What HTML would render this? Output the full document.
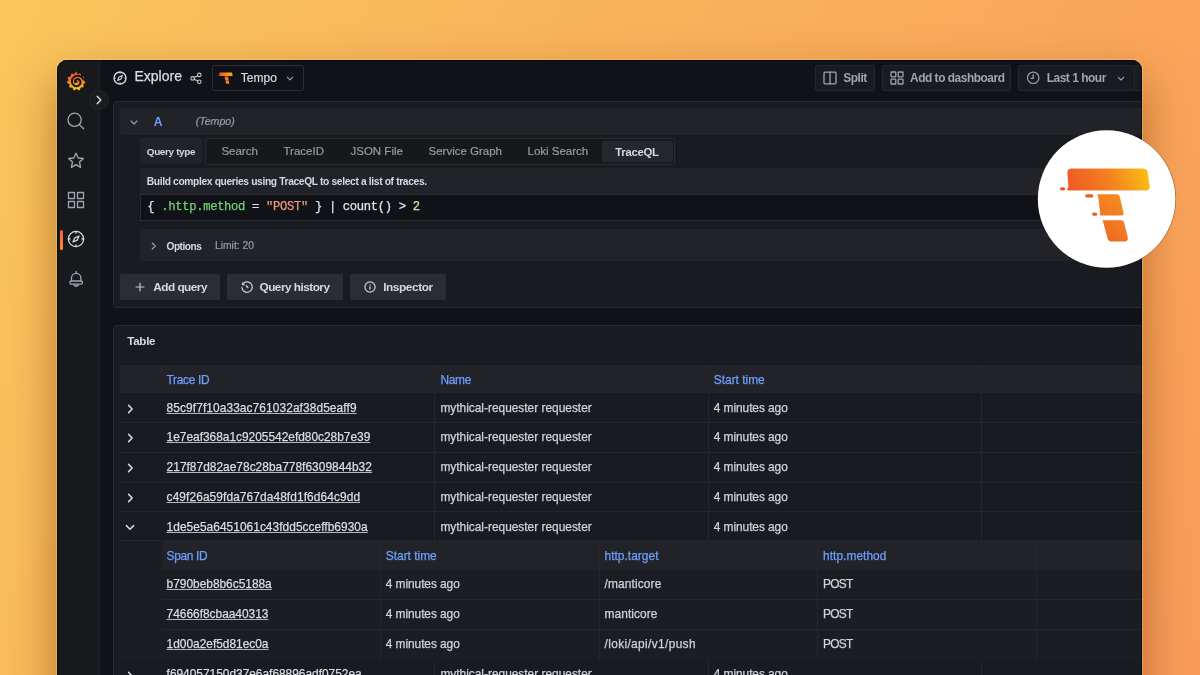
<!DOCTYPE html>
<html><head><meta charset="utf-8">
<style>
*{box-sizing:border-box;margin:0;padding:0}
html,body{width:1200px;height:675px;overflow:hidden}
body{position:relative;font-family:"Liberation Sans",sans-serif;color:#ccccdc;
 background:linear-gradient(115deg,#fac65c 0%,#f9bb5b 21%,#f9b25a 42%,#f9a55a 79%,#f99c5a 100%);}
#shadow{position:absolute;left:57px;top:60px;width:1085px;height:680px;border-radius:10px;background:#111217;
 box-shadow:0 0 0 1px rgba(255,228,110,0.35),0 20px 45px 0 rgba(120,50,0,0.5)}
#win{will-change:transform;position:absolute;left:0;top:0;width:1200px;height:675px;background:#111217;
 clip-path:inset(60px 58px -20px 57px round 10px)}
.t{position:absolute;white-space:nowrap;line-height:1}
.b{position:absolute}
svg{position:absolute;overflow:visible}
.ic{fill:none;stroke:#a4a5b0;stroke-width:1.3;stroke-linecap:round;stroke-linejoin:round}
.tbtn{position:absolute;top:65px;height:26px;background:#181b1f;border:1px solid #25272c;border-radius:2px}
.tbt{font-size:11.9px;font-weight:bold;letter-spacing:-0.45px;color:#a3a4ac}
</style></head>
<body>
<div id="shadow"></div>
<div id="win">
  <!-- sidebar -->
  <div class="b" style="left:57px;top:60px;width:43px;height:620px;background:#17191d"></div>
  <div class="b" style="left:99px;top:60px;width:1px;height:620px;background:#202227"></div>

  <!-- grafana logo -->
  <svg width="20" height="20" style="left:66px;top:71px" viewBox="0 0 20 20">
    <defs><linearGradient id="gl" x1="0" y1="0" x2="0" y2="1"><stop offset="0" stop-color="#ee4b2b"/><stop offset="0.4" stop-color="#f4712a"/><stop offset="1" stop-color="#fbd00e"/></linearGradient></defs>
    <path fill="url(#gl)" d="M10 0.3 L11.6 3 L14.5 2.6 L15.3 5.3 L18.4 6.3 L17.3 9.3 L19.6 11.3 L17.2 13.4 L17.7 16.3 L14.8 16.5 L13.4 19.5 L10.6 18 L7.6 19.6 L6.6 16.8 L3.2 16.3 L3.6 13.3 L0.5 11.6 L2.6 9.2 L1.6 6.2 L4.6 5.4 L5.4 2.6 L8.4 3.1 Z"/>
    <path fill="none" stroke="#141619" stroke-width="2" d="M17.6 8.6 C16 4.6 11 3.8 8 6 C5 8.3 5.2 12.8 8.2 14.6 C10.8 16.1 14 14.8 14.5 12 C14.9 9.5 12.8 7.6 10.6 8.2 C8.8 8.7 8.5 10.8 9.6 11.8"/><circle cx="10.6" cy="10.8" r="1" fill="#141619"/>
  </svg>
  <!-- expand button -->
  <div class="b" style="left:89px;top:90px;width:20px;height:20px;border-radius:50%;background:#1a1c20;border:1px solid #25272c"></div>
  <svg width="20" height="20" style="left:89px;top:90px" viewBox="0 0 20 20"><path d="M8.2 6.2 L11.8 10 L8.2 13.8" fill="none" stroke="#d8d9e0" stroke-width="1.5" stroke-linecap="round" stroke-linejoin="round"/></svg>

  <!-- sidebar icons -->
  <svg width="18" height="18" style="left:67px;top:112px" viewBox="0 0 18 18"><circle class="ic" cx="7.6" cy="7.8" r="6.6"/><path class="ic" d="M12.4 12.6 L16.6 16.8"/></svg>
  <svg width="18" height="18" style="left:66.5px;top:152px" viewBox="0 0 18 18"><path class="ic" d="M9 1.2 L11.2 6 L16.4 6.5 L12.5 10 L13.6 15.4 L9 12.6 L4.4 15.4 L5.5 10 L1.6 6.5 L6.8 6 Z"/></svg>
  <svg width="18" height="18" style="left:66.5px;top:191px" viewBox="0 0 18 18"><rect class="ic" x="1.5" y="1.5" width="6" height="6"/><rect class="ic" x="10.5" y="1.5" width="6" height="6"/><rect class="ic" x="1.5" y="10.5" width="6" height="6"/><rect class="ic" x="10.5" y="10.5" width="6" height="6"/></svg>
  <div class="b" style="left:59.5px;top:230px;width:3px;height:20px;border-radius:2px;background:linear-gradient(#f55f3e,#ff8833)"></div>
  <svg width="18" height="18" style="left:66.5px;top:230px" viewBox="0 0 18 18"><circle class="ic" style="stroke:#d8d9e0" cx="9" cy="9" r="7.6"/><path class="ic" style="stroke:#d8d9e0" d="M12 6 L10.2 10.2 L6 12 L7.8 7.8 Z"/><path class="ic" style="stroke:#d8d9e0" d="M9 1.4 V3 M9 15 V16.6 M1.4 9 H3 M15 9 H16.6"/></svg>
  <svg width="18" height="18" style="left:66.5px;top:271px" viewBox="0 0 18 18"><path class="ic" d="M9.2 0.5 V2.2 M4.5 9.6 V7.2 C4.5 4.4 6.6 2.4 9.2 2.4 C11.8 2.4 13.9 4.4 13.9 7.2 V9.6 M7.1 13.7 A2.2 2.2 0 0 0 11.3 13.7"/><rect class="ic" x="2.9" y="10" width="12.6" height="3.2" rx="1.5"/></svg>

  <!-- top bar -->
  <svg width="14" height="14" style="left:113px;top:70.6px" viewBox="0 0 14 14"><circle class="ic" style="stroke:#d8d9e0;stroke-width:1.35" cx="7" cy="7" r="6"/><path class="ic" style="stroke:#d8d9e0;stroke-width:1.1" d="M9.4 4.6 L8 8 L4.6 9.4 L6 6 Z"/><path class="ic" style="stroke:#d8d9e0;stroke-width:1" d="M7 1.2 V2.3 M7 11.7 V12.8 M1.2 7 H2.3 M11.7 7 H12.8"/></svg>
  <div class="t" style="left:134.5px;top:69px;font-size:14px;color:#dcdde3;-webkit-text-stroke:0.25px currentColor">Explore</div>
  <svg width="13" height="13" style="left:189.5px;top:71.5px" viewBox="0 0 13 13"><circle class="ic" style="stroke:#c8c9d0;stroke-width:1.1" cx="9.3" cy="2.9" r="1.75"/><circle class="ic" style="stroke:#c8c9d0;stroke-width:1.1" cx="2.6" cy="6.4" r="1.75"/><circle class="ic" style="stroke:#c8c9d0;stroke-width:1.1" cx="9.3" cy="9.8" r="1.75"/><path class="ic" style="stroke:#c8c9d0;stroke-width:1.1" d="M4.1 5.6 L7.8 3.7 M4.1 7.2 L7.8 9.0"/></svg>
  <div class="b" style="left:212px;top:65px;width:92px;height:26px;border:1px solid #2a2c31;border-radius:2px"></div>
  <svg width="15" height="12" style="left:217.9px;top:71.9px" viewBox="0 0 15 12">
    <defs><linearGradient id="tl" x1="0" y1="0" x2="1" y2="0"><stop offset="0" stop-color="#f05a28"/><stop offset="1" stop-color="#fbb01a"/></linearGradient></defs>
    <path fill="url(#tl)" d="M2 0.5 H13.4 Q14 0.5 14.2 1.2 L14.6 3.4 Q14.7 4.1 14 4.1 H1.6 Q1.3 4.1 1.4 3.6 L1.5 1.2 Q1.6 0.5 2 0.5 Z"/>
    <rect x="0" y="3.4" width="1.4" height="0.7" rx="0.3" fill="#f05a28"/>
    <path fill="#f47a22" d="M6.6 4.4 H10 L10.7 7.9 H7.2 Z"/><path fill="#f5842a" d="M7.4 8.2 H10.6 L11.3 11.8 H8.1 Z"/>
  </svg>
  <div class="t" style="left:240.8px;top:71.8px;font-size:12px;color:#d8d9e0;-webkit-text-stroke:0.2px currentColor">Tempo</div>
  <svg width="8" height="5" style="left:286.3px;top:76.3px" viewBox="0 0 8 5"><path d="M1.3 1.2 L4 3.8 L6.7 1.2" fill="none" stroke="#a3a4ac" stroke-width="1.1" stroke-linecap="round" stroke-linejoin="round"/></svg>

  <div class="tbtn" style="left:815px;width:60px"></div>
  <svg width="14" height="14" style="left:822.5px;top:71px" viewBox="0 0 14 14"><rect class="ic" style="stroke:#a3a4ac;stroke-width:1.3" x="1" y="1.2" width="12" height="11.6" rx="1"/><path class="ic" style="stroke:#a3a4ac;stroke-width:1.3" d="M7 1.2 V12.8"/></svg>
  <div class="t tbt" style="left:843.3px;top:73.1px">Split</div>

  <div class="tbtn" style="left:882px;width:129px"></div>
  <svg width="14" height="14" style="left:889.5px;top:71px" viewBox="0 0 14 14"><rect class="ic" style="stroke:#a3a4ac" x="1" y="1" width="4.8" height="4.8" rx="0.6"/><rect class="ic" style="stroke:#a3a4ac" x="8.2" y="1" width="4.8" height="4.8" rx="0.6"/><rect class="ic" style="stroke:#a3a4ac" x="1" y="8.2" width="4.8" height="4.8" rx="0.6"/><rect class="ic" style="stroke:#a3a4ac" x="8.2" y="8.2" width="4.8" height="4.8" rx="0.6"/></svg>
  <div class="t tbt" style="left:910px;top:73.1px">Add to dashboard</div>

  <div class="tbtn" style="left:1018px;width:117px"></div>
  <svg width="14" height="14" style="left:1025.5px;top:71px" viewBox="0 0 14 14"><circle class="ic" style="stroke:#a3a4ac;stroke-width:1.2" cx="7.2" cy="6.8" r="5.7"/><path class="ic" style="stroke:#a3a4ac;stroke-width:1.2" d="M7.2 3.6 V7.3 H5.2"/></svg>
  <div class="t tbt" style="left:1046.7px;top:73.1px">Last 1 hour</div>
  <svg width="8" height="5" style="left:1117.2px;top:75.6px" viewBox="0 0 8 5"><path d="M1.3 1.3 L4 4 L6.7 1.3" fill="none" stroke="#a3a4ac" stroke-width="1.1" stroke-linecap="round" stroke-linejoin="round"/></svg>
  <div class="tbtn" style="left:1134px;width:40px"></div>

    <!-- query panel -->
  <div class="b" style="left:113px;top:101px;width:1100px;height:207px;background:#181b1f;border:1px solid #27292d;border-radius:3px"></div>
  <div class="b" style="left:120px;top:108px;width:1100px;height:26.5px;background:#212328;border-radius:2px"></div>
  <svg width="8" height="5" style="left:129.5px;top:119.5px" viewBox="0 0 8 5"><path d="M1 1 L4 4 L7 1" fill="none" stroke="#a3a4ac" stroke-width="1.1" stroke-linecap="round" stroke-linejoin="round"/></svg>
  <div class="t" style="left:153.8px;top:115.6px;font-size:12.1px;font-weight:bold;letter-spacing:0;color:#6e9fff">A</div>
  <div class="t" style="left:195.7px;top:115.9px;font-size:10.6px;font-style:italic;color:#9a9ba3;-webkit-text-stroke:0.2px currentColor">(Tempo)</div>

  <div class="b" style="left:140px;top:138px;width:62px;height:26px;background:#212328;border-radius:2px"></div>
  <div class="t" style="left:146.8px;top:147.1px;font-size:9.9px;font-weight:bold;letter-spacing:-0.322px;color:#d8d9e0">Query type</div>
  <div class="b" style="left:205px;top:138px;width:470px;height:27px;background:#16181c;border:1px solid #2a2c31;border-radius:2px"></div>
  <div class="t" style="left:221.4px;top:146.4px;font-size:11.5px;color:#9a9ba3;-webkit-text-stroke:0.2px currentColor">Search</div>
  <div class="t" style="left:283.5px;top:146.4px;font-size:11.5px;color:#9a9ba3;-webkit-text-stroke:0.2px currentColor">TraceID</div>
  <div class="t" style="left:350.5px;top:146.4px;font-size:11.5px;color:#9a9ba3;-webkit-text-stroke:0.2px currentColor">JSON File</div>
  <div class="t" style="left:428.5px;top:146.4px;font-size:11.5px;color:#9a9ba3;-webkit-text-stroke:0.2px currentColor">Service Graph</div>
  <div class="t" style="left:527.5px;top:146.4px;font-size:11.5px;color:#9a9ba3;-webkit-text-stroke:0.2px currentColor">Loki Search</div>
  <div class="b" style="left:602px;top:141px;width:70.5px;height:21px;background:#25272c;border-radius:2px"></div>
  <div class="t" style="left:615.3px;top:146.6px;font-size:11.3px;font-weight:bold;letter-spacing:-0.260px;color:#d8d9e0">TraceQL</div>

  <div class="b" style="left:140px;top:167.5px;width:1100px;height:26px;background:#212328;border-radius:2px 2px 0 0"></div>
  <div class="t" style="left:146.7px;top:176.6px;font-size:10.25px;font-weight:bold;letter-spacing:-0.353px;color:#d8d9e0">Build complex queries using TraceQL to select a list of traces.</div>
  <div class="b" style="left:140px;top:194px;width:1100px;height:27px;background:#111217;border:1px solid #2a2c31"></div>
  <div class="t" style="left:147.3px;top:201.3px;font-size:12.2px;letter-spacing:-0.33px;-webkit-text-stroke:0.25px currentColor;font-family:'Liberation Mono',monospace;color:#e2e3e8"><span>{</span> <span style="color:#73d475">.http.method</span> = <span style="color:#f0987c">"POST"</span> } | count() &gt; <span style="color:#c2e59c">2</span></div>

  <div class="b" style="left:140px;top:229px;width:1100px;height:31.5px;background:#212328;border-radius:2px"></div>
  <svg width="6" height="8" style="left:150.5px;top:242px" viewBox="0 0 6 8"><path d="M1.2 1 L4.4 4 L1.2 7" fill="none" stroke="#a3a4ac" stroke-width="1.1" stroke-linecap="round" stroke-linejoin="round"/></svg>
  <div class="t" style="left:166.5px;top:241.5px;font-size:10.15px;font-weight:bold;letter-spacing:-0.477px;color:#d8d9e0">Options</div>
  <div class="t" style="left:215px;top:240.5px;font-size:10.3px;color:#9a9ba3;-webkit-text-stroke:0.2px currentColor">Limit: 20</div>

  <div class="b" style="left:120px;top:274px;width:100px;height:26px;background:#2b2d33;border-radius:2px"></div>
  <svg width="10" height="10" style="left:135px;top:282px" viewBox="0 0 10 10"><path d="M5 1 V9 M1 5 H9" fill="none" stroke="#c8c9d0" stroke-width="1.15" stroke-linecap="round"/></svg>
  <div class="t" style="left:153.2px;top:281.7px;font-size:11.8px;font-weight:bold;letter-spacing:-0.505px;color:#d8d9e0">Add query</div>
  <div class="b" style="left:227px;top:274px;width:116px;height:26px;background:#2b2d33;border-radius:2px"></div>
  <svg width="12" height="12" style="left:240.6px;top:280.8px" viewBox="0 0 12 12"><path d="M0.9 6.6 A5.2 5.2 0 1 0 2.6 2.2" fill="none" stroke="#d0d1d8" stroke-width="1.2" stroke-linecap="round"/><path d="M0.9 1.0 L1.0 4.3 L4.3 4.2 Z" fill="#d0d1d8"/><path d="M5.3 4.7 L6.9 6.5" fill="none" stroke="#d0d1d8" stroke-width="1.3" stroke-linecap="round"/></svg>
  <div class="t" style="left:259.5px;top:281.7px;font-size:11.8px;font-weight:bold;letter-spacing:-0.517px;color:#d8d9e0">Query history</div>
  <div class="b" style="left:350px;top:274px;width:96px;height:26px;background:#2b2d33;border-radius:2px"></div>
  <svg width="12" height="12" style="left:363.5px;top:280.8px" viewBox="0 0 12 12"><circle cx="6" cy="6" r="5.1" fill="none" stroke="#d0d1d8" stroke-width="1.2"/><path d="M6 5.9 V7.9" fill="none" stroke="#d0d1d8" stroke-width="1.3" stroke-linecap="round"/><circle cx="6" cy="3.9" r="0.7" fill="#d0d1d8"/></svg>
  <div class="t" style="left:383.2px;top:281.7px;font-size:11.8px;font-weight:bold;letter-spacing:-0.401px;color:#d8d9e0">Inspector</div>

  <!--TABLE-START-->
  <!-- table panel -->
  <div class="b" style="left:113px;top:325px;width:1100px;height:400px;background:#181b1f;border:1px solid #27292d;border-radius:3px"></div>
  <div class="t" style="left:127.3px;top:335.1px;font-size:11.7px;font-weight:bold;letter-spacing:-0.357px;color:#d8d9e0">Table</div>
  <div class="b" style="left:120px;top:365px;width:1100px;height:28.30px;background:#212328"></div>
  <div class="b" style="left:161px;top:365.00px;width:1px;height:8.00px;background:#2a2c31"></div>
  <div class="t" style="left:166.6px;top:374.63px;font-size:11.9px;color:#6e9fff;letter-spacing:-0.31px;-webkit-text-stroke:0.25px currentColor">Trace ID</div>
  <div class="t" style="left:440.4px;top:374.63px;font-size:11.9px;color:#6e9fff;letter-spacing:-0.26px;-webkit-text-stroke:0.25px currentColor">Name</div>
  <div class="t" style="left:713.8px;top:374.63px;font-size:11.9px;color:#6e9fff;-webkit-text-stroke:0.25px currentColor">Start time</div>
  <div class="b" style="left:434px;top:365.00px;width:1px;height:175.60px;background:#24262b"></div>
  <div class="b" style="left:708px;top:365.00px;width:1px;height:175.60px;background:#24262b"></div>
  <div class="b" style="left:981px;top:365.00px;width:1px;height:175.60px;background:#24262b"></div>
  <div class="b" style="left:120px;top:422.10px;width:1100px;height:1px;background:#23252a"></div>
  <svg width="7" height="10" style="left:127px;top:403.75px" viewBox="0 0 7 10"><path d="M1.6 1.4 L5.2 5 L1.6 8.6" fill="none" stroke="#d8d9e0" stroke-width="1.5" stroke-linecap="round" stroke-linejoin="round"/></svg>
  <div class="t" style="left:166.6px;top:402.78px;font-size:11.9px;color:#dcdde3;letter-spacing:0.1px;text-decoration:underline;text-underline-offset:1px;text-decoration-thickness:1px;text-decoration-color:rgba(220,221,227,0.8);-webkit-text-stroke:0.25px currentColor">85c9f7f10a33ac761032af38d5eaff9</div>
  <div class="t" style="left:440.4px;top:402.78px;font-size:11.9px;color:#d2d3da;-webkit-text-stroke:0.25px currentColor">mythical-requester requester</div>
  <div class="t" style="left:713.8px;top:402.78px;font-size:11.9px;color:#d2d3da;letter-spacing:-0.06px;-webkit-text-stroke:0.25px currentColor">4 minutes ago</div>
  <div class="b" style="left:120px;top:451.70px;width:1100px;height:1px;background:#23252a"></div>
  <svg width="7" height="10" style="left:127px;top:433.20px" viewBox="0 0 7 10"><path d="M1.6 1.4 L5.2 5 L1.6 8.6" fill="none" stroke="#d8d9e0" stroke-width="1.5" stroke-linecap="round" stroke-linejoin="round"/></svg>
  <div class="t" style="left:166.6px;top:432.47px;font-size:11.9px;color:#dcdde3;text-decoration:underline;text-underline-offset:1px;text-decoration-thickness:1px;text-decoration-color:rgba(220,221,227,0.8);-webkit-text-stroke:0.25px currentColor">1e7eaf368a1c9205542efd80c28b7e39</div>
  <div class="t" style="left:440.4px;top:432.47px;font-size:11.9px;color:#d2d3da;-webkit-text-stroke:0.25px currentColor">mythical-requester requester</div>
  <div class="t" style="left:713.8px;top:432.47px;font-size:11.9px;color:#d2d3da;letter-spacing:-0.06px;-webkit-text-stroke:0.25px currentColor">4 minutes ago</div>
  <div class="b" style="left:120px;top:482.10px;width:1100px;height:1px;background:#23252a"></div>
  <svg width="7" height="10" style="left:127px;top:463.20px" viewBox="0 0 7 10"><path d="M1.6 1.4 L5.2 5 L1.6 8.6" fill="none" stroke="#d8d9e0" stroke-width="1.5" stroke-linecap="round" stroke-linejoin="round"/></svg>
  <div class="t" style="left:166.6px;top:462.16px;font-size:11.9px;color:#dcdde3;letter-spacing:0.03px;text-decoration:underline;text-underline-offset:1px;text-decoration-thickness:1px;text-decoration-color:rgba(220,221,227,0.8);-webkit-text-stroke:0.25px currentColor">217f87d82ae78c28ba778f6309844b32</div>
  <div class="t" style="left:440.4px;top:462.16px;font-size:11.9px;color:#d2d3da;-webkit-text-stroke:0.25px currentColor">mythical-requester requester</div>
  <div class="t" style="left:713.8px;top:462.16px;font-size:11.9px;color:#d2d3da;letter-spacing:-0.06px;-webkit-text-stroke:0.25px currentColor">4 minutes ago</div>
  <div class="b" style="left:120px;top:511.20px;width:1100px;height:1px;background:#23252a"></div>
  <svg width="7" height="10" style="left:127px;top:492.95px" viewBox="0 0 7 10"><path d="M1.6 1.4 L5.2 5 L1.6 8.6" fill="none" stroke="#d8d9e0" stroke-width="1.5" stroke-linecap="round" stroke-linejoin="round"/></svg>
  <div class="t" style="left:166.6px;top:491.85px;font-size:11.9px;color:#dcdde3;letter-spacing:0.1px;text-decoration:underline;text-underline-offset:1px;text-decoration-thickness:1px;text-decoration-color:rgba(220,221,227,0.8);-webkit-text-stroke:0.25px currentColor">c49f26a59fda767da48fd1f6d64c9dd</div>
  <div class="t" style="left:440.4px;top:491.85px;font-size:11.9px;color:#d2d3da;-webkit-text-stroke:0.25px currentColor">mythical-requester requester</div>
  <div class="t" style="left:713.8px;top:491.85px;font-size:11.9px;color:#d2d3da;letter-spacing:-0.06px;-webkit-text-stroke:0.25px currentColor">4 minutes ago</div>
  <div class="b" style="left:120px;top:540.10px;width:1100px;height:1px;background:#23252a"></div>
  <svg width="10" height="7" style="left:125px;top:523.65px" viewBox="0 0 10 7"><path d="M1.4 1.6 L5 5.2 L8.6 1.6" fill="none" stroke="#d8d9e0" stroke-width="1.5" stroke-linecap="round" stroke-linejoin="round"/></svg>
  <div class="t" style="left:166.6px;top:521.54px;font-size:11.9px;color:#dcdde3;letter-spacing:0.05px;text-decoration:underline;text-underline-offset:1px;text-decoration-thickness:1px;text-decoration-color:rgba(220,221,227,0.8);-webkit-text-stroke:0.25px currentColor">1de5e5a6451061c43fdd5cceffb6930a</div>
  <div class="t" style="left:440.4px;top:521.54px;font-size:11.9px;color:#d2d3da;-webkit-text-stroke:0.25px currentColor">mythical-requester requester</div>
  <div class="t" style="left:713.8px;top:521.54px;font-size:11.9px;color:#d2d3da;letter-spacing:-0.06px;-webkit-text-stroke:0.25px currentColor">4 minutes ago</div>
  <div class="b" style="left:120px;top:540.60px;width:1100px;height:120.00px;background:#1b1d22"></div>
  <div class="b" style="left:161.5px;top:540.60px;width:1100px;height:29.60px;background:#212328"></div>
  <div class="b" style="left:380px;top:540.60px;width:1px;height:118.20px;background:#25272c"></div>
  <div class="b" style="left:598.5px;top:540.60px;width:1px;height:118.20px;background:#25272c"></div>
  <div class="b" style="left:817.3px;top:540.60px;width:1px;height:118.20px;background:#25272c"></div>
  <div class="b" style="left:1035.5px;top:540.60px;width:1px;height:118.20px;background:#25272c"></div>
  <div class="t" style="left:166.6px;top:551.23px;font-size:11.9px;color:#6e9fff;letter-spacing:-0.33px;-webkit-text-stroke:0.25px currentColor">Span ID</div>
  <div class="t" style="left:385.8px;top:551.23px;font-size:11.9px;color:#6e9fff;-webkit-text-stroke:0.25px currentColor">Start time</div>
  <div class="t" style="left:604.5px;top:551.23px;font-size:11.9px;color:#6e9fff;letter-spacing:0.04px;-webkit-text-stroke:0.25px currentColor">http.target</div>
  <div class="t" style="left:823px;top:551.23px;font-size:11.9px;color:#6e9fff;letter-spacing:0.06px;-webkit-text-stroke:0.25px currentColor">http.method</div>
  <div class="b" style="left:161.5px;top:598.90px;width:1100px;height:1px;background:#25272c"></div>
  <div class="t" style="left:166.6px;top:579.13px;font-size:11.9px;color:#dcdde3;text-decoration:underline;text-underline-offset:1px;text-decoration-thickness:1px;text-decoration-color:rgba(220,221,227,0.8);-webkit-text-stroke:0.25px currentColor">b790beb8b6c5188a</div>
  <div class="t" style="left:385.8px;top:579.13px;font-size:11.9px;color:#d2d3da;letter-spacing:-0.06px;-webkit-text-stroke:0.25px currentColor">4 minutes ago</div>
  <div class="t" style="left:604.5px;top:579.13px;font-size:11.9px;color:#d2d3da;letter-spacing:0.145px;-webkit-text-stroke:0.25px currentColor">/manticore</div>
  <div class="t" style="left:823px;top:579.13px;font-size:11.9px;color:#d2d3da;letter-spacing:-0.7px;-webkit-text-stroke:0.25px currentColor">POST</div>
  <div class="b" style="left:161.5px;top:628.60px;width:1100px;height:1px;background:#25272c"></div>
  <div class="t" style="left:166.6px;top:608.83px;font-size:11.9px;color:#dcdde3;text-decoration:underline;text-underline-offset:1px;text-decoration-thickness:1px;text-decoration-color:rgba(220,221,227,0.8);-webkit-text-stroke:0.25px currentColor">74666f8cbaa40313</div>
  <div class="t" style="left:385.8px;top:608.83px;font-size:11.9px;color:#d2d3da;letter-spacing:-0.06px;-webkit-text-stroke:0.25px currentColor">4 minutes ago</div>
  <div class="t" style="left:604.5px;top:608.83px;font-size:11.9px;color:#d2d3da;letter-spacing:0.084px;-webkit-text-stroke:0.25px currentColor">manticore</div>
  <div class="t" style="left:823px;top:608.83px;font-size:11.9px;color:#d2d3da;letter-spacing:-0.7px;-webkit-text-stroke:0.25px currentColor">POST</div>
  <div class="t" style="left:166.6px;top:639.13px;font-size:11.9px;color:#dcdde3;text-decoration:underline;text-underline-offset:1px;text-decoration-thickness:1px;text-decoration-color:rgba(220,221,227,0.8);-webkit-text-stroke:0.25px currentColor">1d00a2ef5d81ec0a</div>
  <div class="t" style="left:385.8px;top:639.13px;font-size:11.9px;color:#d2d3da;letter-spacing:-0.06px;-webkit-text-stroke:0.25px currentColor">4 minutes ago</div>
  <div class="t" style="left:604.5px;top:639.13px;font-size:11.9px;color:#d2d3da;letter-spacing:0.36px;-webkit-text-stroke:0.25px currentColor">/loki/api/v1/push</div>
  <div class="t" style="left:823px;top:639.13px;font-size:11.9px;color:#d2d3da;letter-spacing:-0.7px;-webkit-text-stroke:0.25px currentColor">POST</div>
  <div class="b" style="left:434px;top:660.60px;width:1px;height:40.00px;background:#24262b"></div>
  <div class="b" style="left:708px;top:660.60px;width:1px;height:40.00px;background:#24262b"></div>
  <div class="b" style="left:981px;top:660.60px;width:1px;height:40.00px;background:#24262b"></div>
  <svg width="7" height="10" style="left:127px;top:671.10px" viewBox="0 0 7 10"><path d="M1.6 1.4 L5.2 5 L1.6 8.6" fill="none" stroke="#d8d9e0" stroke-width="1.5" stroke-linecap="round" stroke-linejoin="round"/></svg>
  <div class="t" style="left:166.6px;top:669.13px;font-size:11.9px;color:#dcdde3;text-decoration:underline;text-underline-offset:1px;text-decoration-thickness:1px;text-decoration-color:rgba(220,221,227,0.8);-webkit-text-stroke:0.25px currentColor">f694057150d37e6af68896adf0752ea</div>
  <div class="t" style="left:440.4px;top:669.13px;font-size:11.9px;color:#d2d3da;-webkit-text-stroke:0.25px currentColor">mythical-requester requester</div>
  <div class="t" style="left:713.8px;top:669.13px;font-size:11.9px;color:#d2d3da;letter-spacing:-0.06px;-webkit-text-stroke:0.25px currentColor">4 minutes ago</div>
<!--TABLE-END-->
</div>
<div style="position:absolute;left:57px;top:60px;width:1085px;height:700px;border-radius:10px;border:1px solid rgba(0,0,0,0.6);pointer-events:none"></div>
<svg width="1200" height="675" style="left:0;top:0" viewBox="0 0 1200 675">
  <defs>
    <linearGradient id="tg" gradientUnits="userSpaceOnUse" x1="1062" y1="200" x2="1150" y2="170">
      <stop offset="0" stop-color="#ee4f29"/><stop offset="0.55" stop-color="#f4801f"/><stop offset="1" stop-color="#fbc213"/>
    </linearGradient>
    <linearGradient id="tg2" gradientUnits="userSpaceOnUse" x1="1095" y1="240" x2="1130" y2="195">
      <stop offset="0" stop-color="#f16224"/><stop offset="1" stop-color="#f4921f"/>
    </linearGradient>
  </defs>
  <circle cx="1106.6" cy="199" r="69" fill="none" stroke="rgba(40,20,10,0.45)" stroke-width="1"/><circle cx="1106.6" cy="199" r="68.8" fill="#ffffff"/>
  <path fill="url(#tg)" stroke="url(#tg)" stroke-width="0.4" d="M1071.4 168.8 H1143 Q1147 168.8 1147.6 172.8 L1149.5 186.2 Q1150 190.2 1145.8 190.2 H1067.6 Q1066.9 190.2 1067.3 189.5 Q1068.6 188.6 1068.5 186 L1067.6 173 Q1067.3 168.8 1071.4 168.8 Z"/>
  <rect x="1060" y="187.2" width="5.2" height="3.2" rx="1.6" fill="#ef5428"/>
  <path fill="url(#tg2)" d="M1097.2 194.3 H1117 Q1119.4 194.3 1119.8 196.8 L1123.5 213 Q1123.9 215.5 1121.4 215.5 H1100.2 Q1099.6 215.5 1099.9 214.6 Q1100.4 213.5 1100.1 211.8 L1098.3 197.4 Q1098 195 1097.2 194.3 Z"/>
  <rect x="1085.2" y="194.3" width="8.2" height="3.2" rx="1.6" fill="#f05a26"/>
  <rect x="1092.2" y="212.6" width="5" height="3.1" rx="1.55" fill="#f05a26"/>
  <path fill="url(#tg2)" d="M1102.4 220.2 H1121.6 Q1123.6 220.2 1124 222.4 L1127.8 237.6 Q1128.4 241.6 1124.6 241.6 H1111.2 Q1108.6 241.6 1107.8 239 L1103.4 223 Q1102.6 220.2 1102.4 220.2 Z"/>
</svg>
</body></html>
